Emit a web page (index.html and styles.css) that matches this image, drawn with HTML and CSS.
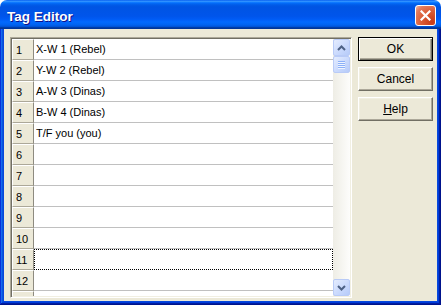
FILE: index.html
```html
<!DOCTYPE html>
<html>
<head>
<meta charset="utf-8">
<link rel="stylesheet" href="styles.css">
</head>
<body>
<div class="window">
  <div class="titlebar">
    <span class="title">Tag Editor</span>
    <div class="close">
      <svg width="11" height="11" viewBox="0 0 11 11"><path d="M1.5 1.5 L9.5 9.5 M9.5 1.5 L1.5 9.5" stroke="#fff" stroke-width="2.2" stroke-linecap="square" fill="none"/></svg>
    </div>
  </div>
  <div class="frame">
    <div class="client">
      <div class="grid">
        <div class="rows">
          <div class="row"><div class="num">1</div><div class="cell">X-W 1 (Rebel)</div></div>
          <div class="row"><div class="num">2</div><div class="cell">Y-W 2 (Rebel)</div></div>
          <div class="row"><div class="num">3</div><div class="cell">A-W 3 (Dinas)</div></div>
          <div class="row"><div class="num">4</div><div class="cell">B-W 4 (Dinas)</div></div>
          <div class="row"><div class="num">5</div><div class="cell">T/F you (you)</div></div>
          <div class="row"><div class="num">6</div><div class="cell"></div></div>
          <div class="row"><div class="num">7</div><div class="cell"></div></div>
          <div class="row"><div class="num">8</div><div class="cell"></div></div>
          <div class="row"><div class="num">9</div><div class="cell"></div></div>
          <div class="row"><div class="num">10</div><div class="cell"></div></div>
          <div class="row"><div class="num">11</div><div class="cell focus"></div></div>
          <div class="row"><div class="num">12</div><div class="cell"></div></div>
          <div class="row"><div class="num">13</div><div class="cell"></div></div>
        </div>
        <div class="vscroll">
          <div class="sb-btn">
            <svg width="9" height="6" viewBox="0 0 9 6"><path d="M1 5 L4.5 1.5 L8 5" stroke="#4D6185" stroke-width="2" fill="none"/></svg>
          </div>
          <div class="sb-thumb">
            <span class="grip"></span><span class="grip"></span><span class="grip"></span><span class="grip"></span>
          </div>
          <div class="sb-track"></div>
          <div class="sb-btn">
            <svg width="9" height="6" viewBox="0 0 9 6"><path d="M1 1 L4.5 4.5 L8 1" stroke="#4D6185" stroke-width="2" fill="none"/></svg>
          </div>
        </div>
      </div>
      <div class="buttons">
        <button class="btn default">OK</button>
        <button class="btn">Cancel</button>
        <button class="btn"><u>H</u>elp</button>
      </div>
    </div>
  </div>
</div>
</body>
</html>
```
FILE: styles.css
```css
html, body {
  margin: 0;
  padding: 0;
  background: #fff;
}
.window {
  width: 441px;
  height: 305px;
  display: flex;
  flex-direction: column;
  font-family: "Liberation Sans", Arial, sans-serif;
}
.titlebar {
  height: 29px;
  box-sizing: border-box;
  flex: none;
  border-radius: 7px 7px 0 0;
  background: linear-gradient(to bottom, #0058EE 0%, #3593FF 4%, #288EFF 6%, #127DFF 8%, #036FFC 10%, #0262EE 14%, #0057E5 20%, #0054E3 24%, #0055EB 56%, #005BF5 66%, #026AFE 76%, #0062EF 86%, #0052D6 92%, #0040AB 94%, #003092 100%);
  display: flex;
  align-items: center;
  padding: 1px 5px 0 7px;
}
.title {
  flex: 1;
  color: #fff;
  font-weight: bold;
  font-size: 13.5px;
  text-shadow: 1px 1px #0F1089;
  padding-top: 2px;
}
.close {
  width: 21px;
  height: 21px;
  box-sizing: border-box;
  border: 1px solid #fff;
  border-radius: 3px;
  background: radial-gradient(circle at 85% 85%, #C83A16 0%, #DA5A33 45%, #E47C5E 80%, #F2B7A6 100%);
  display: flex;
  align-items: center;
  justify-content: center;
}
.close svg { display: block; }
.frame {
  flex: 1;
  display: flex;
  padding: 0 4px 4px;
  background: #0748DC;
  box-shadow: inset -1px -1px #00138C, inset 1px 0 #0831D9, inset -2px -2px #001EA0, inset 2px 0 #166AEE, inset -3px -3px #003BDA, inset 3px 0 #0855DD;
}
.client {
  flex: 1;
  background: #ECE9D8;
  display: flex;
  align-items: flex-start;
  padding: 8px 4px 3px 6px;
  gap: 6px;
}
.grid {
  width: 342px;
  height: 261px;
  box-sizing: border-box;
  border: 1px solid;
  border-color: #ACA899 #FFFFFF #FFFFFF #ACA899;
  padding: 1px;
  box-shadow: inset 1px 1px #716F64, inset -1px -1px #F1EFE2;
  background: #fff;
  display: flex;
}
.rows {
  flex: 1;
  overflow: hidden;
  display: flex;
  flex-direction: column;
}
.row {
  flex: none;
  height: 21px;
  display: flex;
  font-size: 11px;
  color: #000;
}
.num {
  width: 22px;
  box-sizing: border-box;
  background: #ECE9D8;
  border-top: 1px solid #fff;
  border-left: 1px solid #fff;
  border-right: 1px solid #8E8B80;
  border-bottom: 1px solid #ACA899;
  padding-left: 3px;
  display: flex;
  align-items: center;
}
.cell {
  flex: 1;
  box-sizing: border-box;
  border-bottom: 1px solid #C0C0C0;
  padding-left: 2px;
  display: flex;
  align-items: center;
}
.cell.focus {
  border: 1px dotted #000;
}
.vscroll {
  width: 17px;
  flex: none;
  display: flex;
  flex-direction: column;
  background: linear-gradient(to right, #EEEDE5, #FDFDFB);
}
.sb-btn, .sb-thumb {
  height: 17px;
  box-sizing: border-box;
  border: 1px solid #B9CBF7;
  border-radius: 2px;
  background: linear-gradient(135deg, #E4ECFE 0%, #CCDBFD 50%, #B6CBF9 100%);
  display: flex;
  align-items: center;
  justify-content: center;
  flex: none;
}
.sb-btn svg { display: block; }
.sb-thumb {
  flex-direction: column;
  gap: 1px;
}
.grip {
  width: 7px;
  height: 1px;
  background: #8CB0F8;
  box-shadow: 0 1px #EEF4FE;
}
.sb-track { flex: 1; }
.buttons {
  width: 75px;
  display: flex;
  flex-direction: column;
  gap: 6px;
}
.btn {
  width: 75px;
  height: 24px;
  margin: 0;
  padding: 0;
  box-sizing: border-box;
  font-family: "Liberation Sans", Arial, sans-serif;
  font-size: 12px;
  color: #000;
  background: #ECE9D8;
  border: 1px solid;
  border-color: #FFFFFF #716F64 #716F64 #FFFFFF;
  box-shadow: inset -1px -1px #ACA899, inset 1px 1px #F1EFE2;
}
.btn.default {
  border: 1px solid #000;
  box-shadow: inset 1px 1px #fff, inset -1px -1px #716F64, inset -2px -2px #ACA899;
}
```
